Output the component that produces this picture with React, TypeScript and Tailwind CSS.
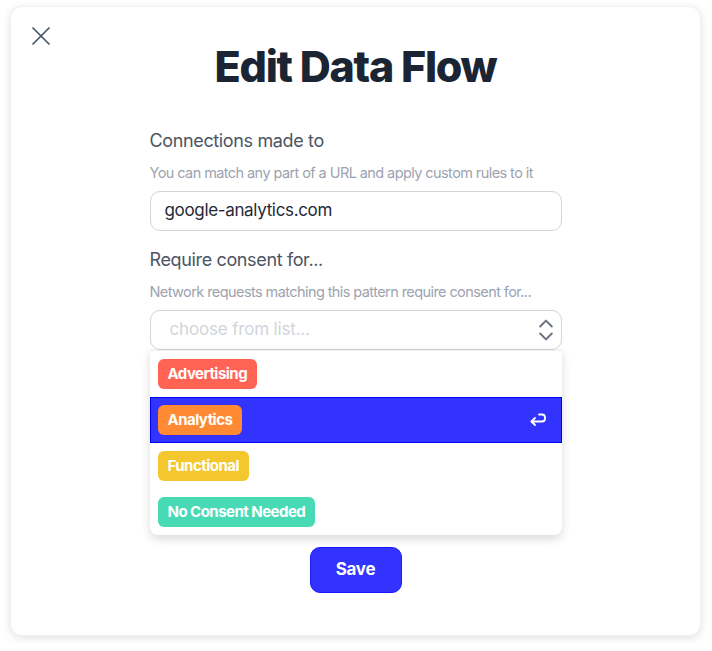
import React from "react";
import { X, ChevronsUpDown } from "lucide-react";

const options = [
  { label: "Advertising", color: "bg-[#ff6353]" },
  { label: "Analytics", color: "bg-[#ff8a33]", active: true },
  { label: "Functional", color: "bg-[#f4c72e]" },
  { label: "No Consent Needed", color: "bg-[#47dab5]" },
];

function EnterIcon() {
  return (
    <svg width="18" height="16" viewBox="0 0 18 16" fill="none" stroke="currentColor" strokeWidth="1.8" strokeLinecap="round" strokeLinejoin="round" className="text-white">
      <path d="M10 2.5h3a3 3 0 0 1 3 3v1a3 3 0 0 1-3 3H2.5" />
      <path d="M6 6 2.5 9.5 6 13" />
    </svg>
  );
}

export default function App() {
  return (
    <div className="w-[712px] h-[651px] bg-white pt-[6px] pl-[10px]" style={{ fontFamily: "Inter, 'Noto Sans', sans-serif" }}>
      <div className="relative w-[691px] h-[630px] bg-white rounded-[12px] shadow-[0_2px_8px_rgba(0,0,0,0.12)] border border-[#f1f1f1] flex flex-col items-center pt-[33px]">
        <button className="absolute top-[13px] left-[14px] text-[#475569]">
          <X size={32} strokeWidth={1.3} />
        </button>
        <h1 className="text-[43px] leading-[52px] font-extrabold tracking-[-0.03em] text-[#1a2433]">Edit Data Flow</h1>
        <div className="w-[412px] flex flex-col mt-[37px]">
          <div className="text-[18px] leading-[24px] text-[#4b5563] tracking-[-0.02em]">Connections made to</div>
          <div className="mt-[10px] text-[14.5px] leading-[20px] text-[#9ca3af] tracking-[-0.04em] whitespace-nowrap">You can match any part of a URL and apply custom rules to it</div>
          <div className="mt-[8px] h-[40px] rounded-[10px] border border-[#d4d4d8] flex items-center px-[14px] text-[17px] text-[#1f2937] tracking-[-0.02em]">google-analytics.com</div>
          <div className="mt-[17px] text-[18px] leading-[24px] text-[#4b5563] tracking-[-0.02em]">Require consent for...</div>
          <div className="mt-[10px] text-[14.5px] leading-[20px] text-[#9ca3af] tracking-[-0.04em] whitespace-nowrap">Network requests matching this pattern require consent for...</div>
          <div className="mt-[8px] h-[40px] rounded-[10px] border border-[#d4d4d8] flex items-center justify-between pl-[19px] pr-[1px] text-[17px] text-[#d1d5db] tracking-[-0.01em]">
            <span>choose from list...</span>
            <ChevronsUpDown size={28} strokeWidth={1.7} className="text-[#6b7280]" />
          </div>
          <div className="bg-white rounded-b-[8px] shadow-[0_4px_10px_rgba(0,0,0,0.15)] border-t border-[#eeeeee] flex flex-col">
            {options.map((o) => (
              <div
                key={o.label}
                className={
                  o.active
                    ? "h-[46px] flex items-center justify-between pl-[7px] pr-[14px] bg-[#3333ff] border border-[#0000ff]"
                    : "h-[46px] flex items-center pl-[8px]"
                }
              >
                <span className={`${o.color} h-[30px] rounded-[6px] px-[10px] flex items-center text-[15px] font-bold text-white tracking-[-0.035em]`}>
                  {o.label}
                </span>
                {o.active && <EnterIcon />}
              </div>
            ))}
          </div>
          <div className="flex justify-center mt-[12px]">
            <button className="w-[92px] h-[46px] rounded-[10px] bg-[#3333ff] border border-[#1a1aff] text-white text-[17px] font-bold tracking-[-0.02em]">Save</button>
          </div>
        </div>
      </div>
    </div>
  );
}
